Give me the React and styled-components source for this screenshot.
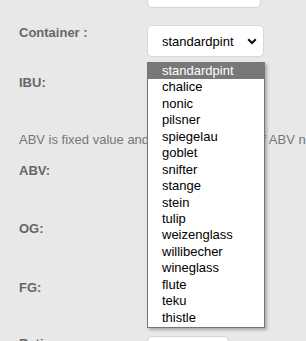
import React from 'react';
import styled, { createGlobalStyle } from 'styled-components';

const GlobalStyle = createGlobalStyle`
  html, body {
    margin: 0;
    padding: 0;
    background: #e8e8e8;
    overflow: hidden;
  }
  body {
    font-family: 'Liberation Sans', Arial, sans-serif;
  }
`;

const containers = [
  'standardpint',
  'chalice',
  'nonic',
  'pilsner',
  'spiegelau',
  'goblet',
  'snifter',
  'stange',
  'stein',
  'tulip',
  'weizenglass',
  'willibecher',
  'wineglass',
  'flute',
  'teku',
  'thistle'
];

const Page = styled.div`
  width: 640px;
  padding-left: 19px;
  display: flex;
  flex-direction: column;
`;

const Row = styled.div`
  display: grid;
  grid-template-columns: 128px auto;
  align-items: start;
  margin-top: ${props => props.$top}px;
  position: relative;
`;

const Label = styled.label`
  font-size: 13px;
  font-weight: bold;
  color: #666;
  line-height: 15px;
`;

const Input = styled.div`
  width: ${props => props.$width || 114}px;
  height: 32px;
  box-sizing: border-box;
  background: #fff;
  border: 1px solid #d4d4d4;
  border-radius: 5px;
`;

const Select = styled.div`
  position: relative;
  width: 117px;
  height: 32px;
  box-sizing: border-box;
  background: #fff;
  border: 1px solid #d8d8d8;
  border-radius: 5px;
  display: flex;
  align-items: center;
  justify-content: space-between;
  padding: 0 6px 0 14px;
  font-size: 13px;
  color: #000;
`;

const Chevron = () => (
  <svg width="10" height="7" viewBox="0 0 10 7">
    <path d="M1.2 1.3 L5 5 L8.8 1.3" fill="none" stroke="#111" strokeWidth="2.1" />
  </svg>
);

const Note = styled.p`
  margin: 0;
  margin-top: ${props => props.$top}px;
  font-size: 13px;
  line-height: 15px;
  color: #777;
  white-space: nowrap;
`;

const Popup = styled.ul`
  position: absolute;
  top: 37px;
  left: 0;
  z-index: 10;
  width: 118px;
  box-sizing: border-box;
  margin: 0;
  padding: 0 0 1px;
  list-style: none;
  background: #fff;
  border: 1px solid #767676;
  box-shadow: 2px 2px 3px rgba(0, 0, 0, 0.28);
`;

const Option = styled.li`
  height: 16.45px;
  line-height: 16.45px;
  padding-left: 14px;
  font-size: 13px;
  color: ${props => (props.$selected ? '#fff' : '#000')};
  background: ${props => (props.$selected ? '#787878' : 'transparent')};
`;

const SelectWrap = styled.div`
  position: relative;
`;

export default function App() {
  return (
    <>
      <GlobalStyle />
      <Page>
        <Row $top={-24}>
          <Label />
          <Input />
        </Row>
        <Row $top={17}>
          <Label>Container :</Label>
          <SelectWrap>
            <Select>
              <span>standardpint</span>
              <Chevron />
            </Select>
            <Popup>
              {containers.map((name, i) => (
                <Option key={name} $selected={i === 0}>
                  {name}
                </Option>
              ))}
            </Popup>
          </SelectWrap>
        </Row>
        <Row $top={18}>
          <Label>IBU:</Label>
          <Input />
        </Row>
        <Note $top={25}>
          ABV is fixed value and is auto set. Value of ABV needs no input from the user.
        </Note>
        <Row $top={16}>
          <Label>ABV:</Label>
          <Input />
        </Row>
        <Row $top={26}>
          <Label>OG:</Label>
          <Input />
        </Row>
        <Row $top={27}>
          <Label>FG:</Label>
          <Input />
        </Row>
        <Row $top={24}>
          <Label>Ratio:</Label>
          <Input $width={82} />
        </Row>
      </Page>
    </>
  );
}
